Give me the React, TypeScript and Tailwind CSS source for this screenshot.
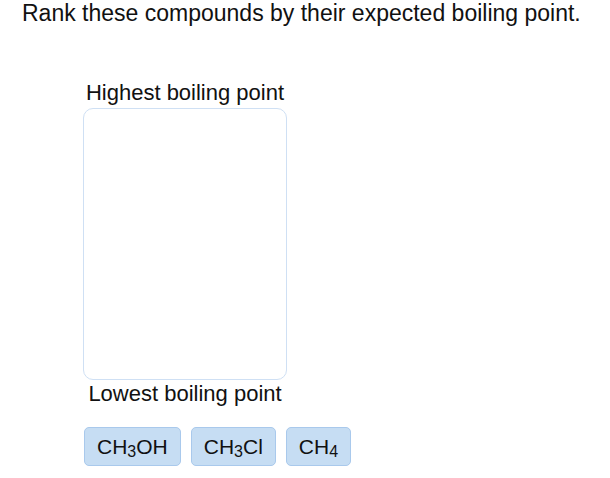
export default function App() {
  const sub = 'text-[16px] -bottom-[3px]'
  const items = [
    { id: 'a', label: <>CH<sub className={sub}>3</sub>OH</> },
    { id: 'b', label: <>CH<sub className={sub}>3</sub>Cl</> },
    { id: 'c', label: <>CH<sub className={sub}>4</sub></> },
  ]

  return (
    <div
      className="w-[610px] h-[478px] bg-white text-[#111] overflow-hidden"
      style={{ fontFamily: '"Liberation Sans", Arial, sans-serif' }}
    >
      <h1 className="pl-[22px] pt-0 text-[23px] leading-[26px]">
        Rank these compounds by their expected boiling point.
      </h1>

      <div className="ml-[83px] mt-[54px] w-[204px] flex flex-col items-center">
        <div className="text-[22px] leading-[26px]">Highest boiling point</div>
        <div className="mt-[2px] w-[204px] h-[272px] border border-[#cfe0f4] rounded-[10px]" />
        <div className="mt-[1px] text-[22px] leading-[26px]">Lowest boiling point</div>
      </div>

      <div className="ml-[84px] mt-[20px] flex gap-[10px]">
        {items.map((it) => (
          <div
            key={it.id}
            className="h-[39px] px-[12px] flex items-center bg-[#c6ddf3] border border-[#a9c9ec] rounded-[5px] text-[21px]"
          >
            <span>{it.label}</span>
          </div>
        ))}
      </div>
    </div>
  )
}
